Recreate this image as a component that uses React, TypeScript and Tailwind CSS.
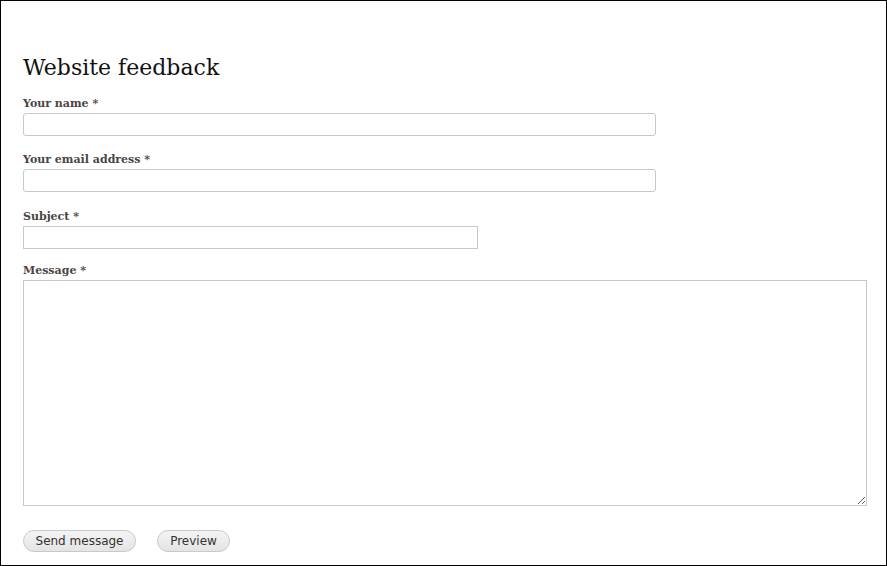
const labelClass = "block text-[11px] font-bold leading-[18px] text-[#4a4444]";
const serif = "font-['DejaVu_Serif','Liberation_Serif',serif]";

function Field({ label, children, className = "" }: { label: string; children: React.ReactNode; className?: string }) {
  return (
    <div className={className}>
      <label className={`${labelClass} ${serif}`}>
        {label} <span>*</span>
      </label>
      {children}
    </div>
  );
}

export default function App() {
  return (
    <div className="h-[566px] w-[887px] border border-black bg-white pl-[22px] pt-[51px]">
      <h1 className={`${serif} text-[22px] leading-[32px] text-[#111]`}>Website feedback</h1>
      <form className="mt-[11px]">
        <Field label="Your name">
          <input type="text" className="block h-[23px] w-[633px] rounded-[3px] border border-[#c8c8c8] bg-white" />
        </Field>
        <Field label="Your email address" className="mt-[15px]">
          <input type="email" className="block h-[23px] w-[633px] rounded-[3px] border border-[#c8c8c8] bg-white" />
        </Field>
        <Field label="Subject" className="mt-[16px]">
          <input type="text" className="block h-[23px] w-[455px] border border-[#c8c8c8] bg-white" />
        </Field>
        <Field label="Message" className="mt-[13px]">
          <textarea className="block h-[226px] w-[844px] border border-[#c8c8c8] bg-white" />
        </Field>
        <div className="mt-[24px] flex gap-[21px] font-['DejaVu_Sans','Liberation_Sans',sans-serif] text-[12px] text-[#333]">
          <button type="button" className="h-[22px] w-[113px] rounded-full border border-[#c9c9c9] bg-gradient-to-b from-[#f4f4f4] to-[#e4e4e4]">
            Send message
          </button>
          <button type="button" className="h-[22px] w-[73px] rounded-full border border-[#c9c9c9] bg-gradient-to-b from-[#f4f4f4] to-[#e4e4e4]">
            Preview
          </button>
        </div>
      </form>
    </div>
  );
}
